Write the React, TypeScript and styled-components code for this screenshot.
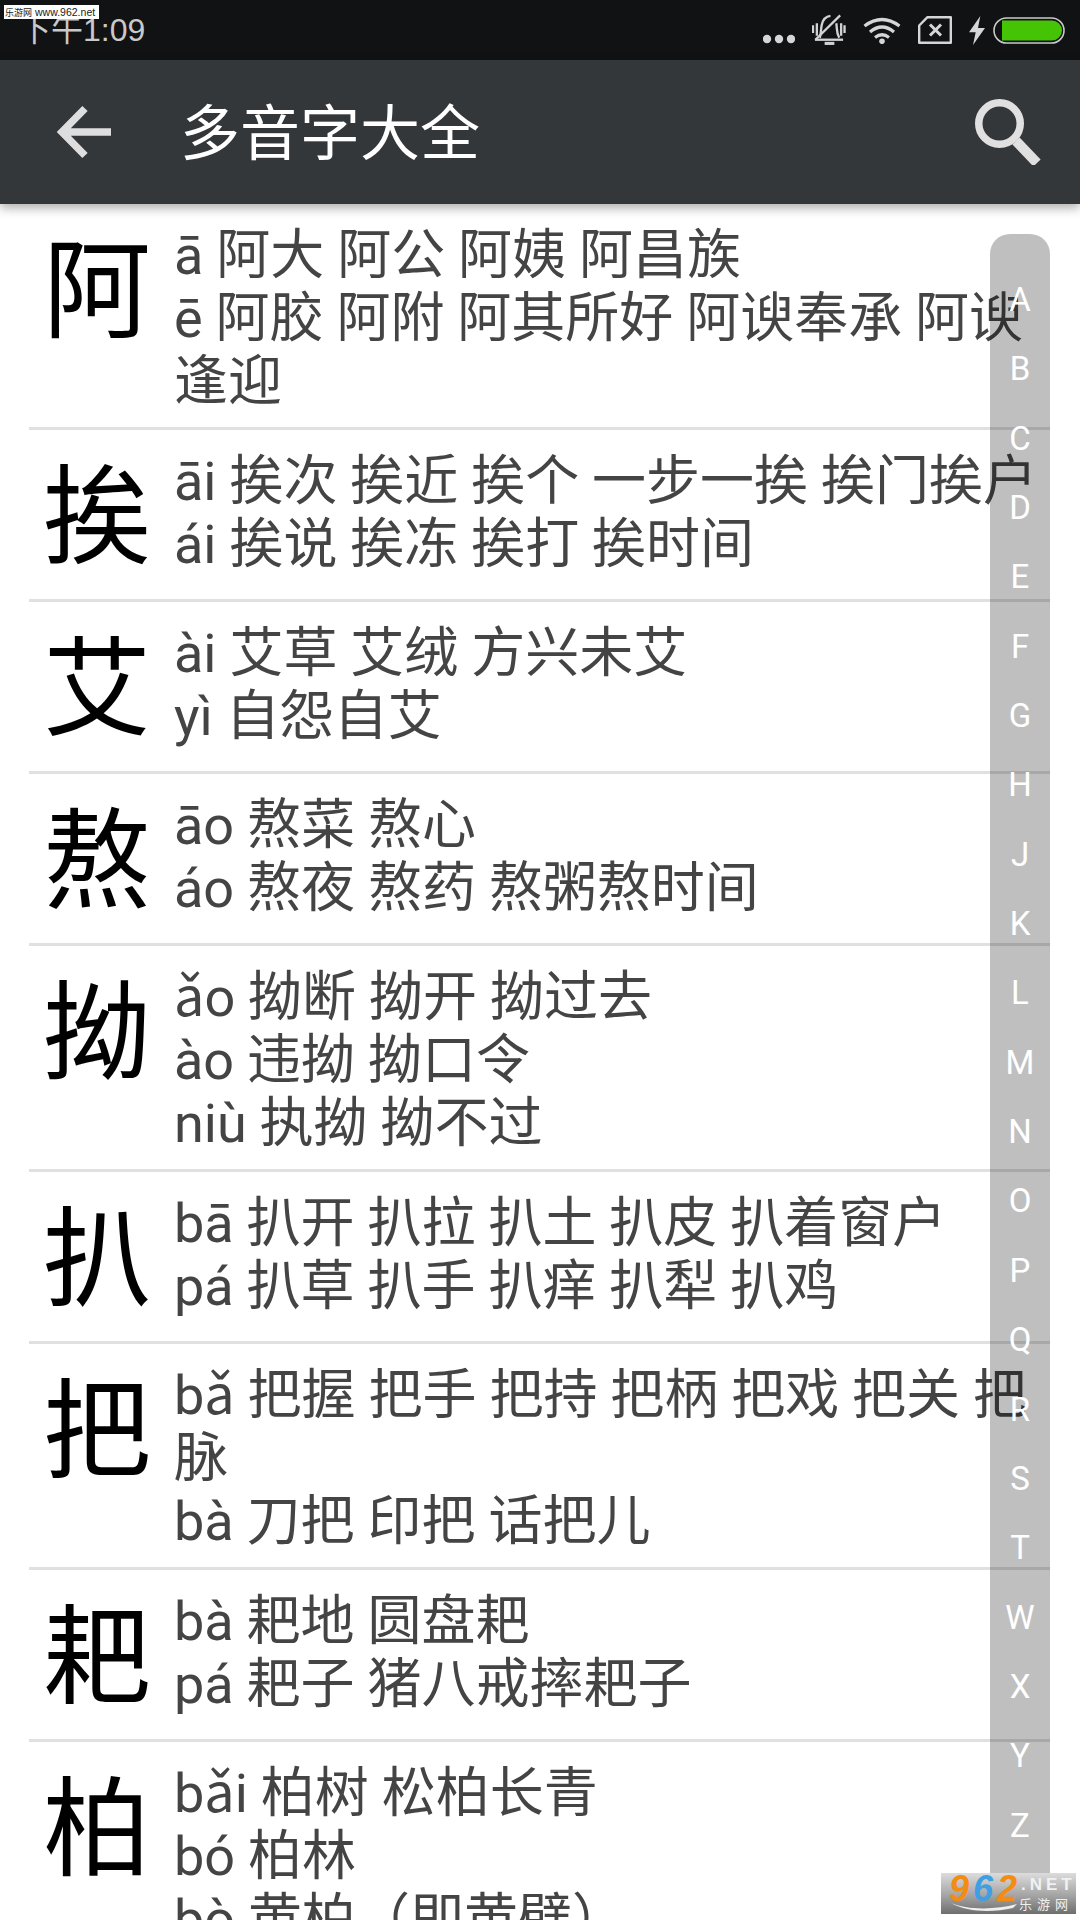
import React from "react";
import styled, { createGlobalStyle } from "styled-components";

const Global = createGlobalStyle`
  html, body { margin: 0; padding: 0; background: #fff; }
  #root { width: 1080px; height: 1920px; overflow: hidden; }
`;

const Page = styled.div`
  position: relative;
  width: 1080px;
  height: 1920px;
  overflow: hidden;
  background: #fff;
  font-family: Roboto, "Noto Sans CJK SC", sans-serif;
`;

const StatusBar = styled.div`
  height: 60px;
  background: #111213;
  display: flex;
  align-items: center;
  justify-content: space-between;
  padding: 0 15px 0 19px;
  box-sizing: border-box;
`;

const Clock = styled.div`
  font-size: 32px;
  line-height: 60px;
  color: #c9c9c9;
  font-family: "Liberation Sans", "Noto Sans CJK SC", sans-serif;
`;

const StatusIcons = styled.div`
  display: flex;
  align-items: center;
`;

const StatusIcon = styled.svg<{ $gap: number; $drop?: number }>`
  display: block;
  margin-left: ${(p) => p.$gap}px;
  margin-top: ${(p) => p.$drop ?? 0}px;
`;

const Toolbar = styled.header`
  position: relative;
  z-index: 1;
  height: 144px;
  background: #33373a;
  box-shadow: 0 4px 10px rgba(0, 0, 0, 0.32);
  display: flex;
  align-items: center;
  padding: 0 39px 0 52px;
  box-sizing: border-box;
`;

const Title = styled.h1`
  flex: 1;
  margin: 0 0 0 64px;
  padding-top: 6px;
  font-size: 60px;
  line-height: 138px;
  font-weight: 400;
  color: #fff;
`;

const List = styled.div`
  display: flex;
  flex-direction: column;
`;

const Row = styled.div`
  display: flex;
  align-items: flex-start;
  margin: 0 30px 0 29px;
  min-height: 172px;
  box-sizing: border-box;
  border-bottom: 3px solid #e0e0e0;
`;

const Glyph = styled.div`
  flex: 0 0 145px;
  box-sizing: border-box;
  padding: 8px 0 0 14px;
  font-size: 108px;
  line-height: 161px;
  color: #000;
`;

const Readings = styled.div`
  flex: 1;
  min-width: 0;
  padding: 20px 0 14px;
`;

const Reading = styled.div`
  font-size: 54px;
  line-height: 63px;
  word-spacing: -0.5px;
  color: #444;
`;

const IndexBar = styled.nav`
  position: absolute;
  top: 234px;
  left: 990px;
  width: 60px;
  height: 1660px;
  border-radius: 20px;
  background: rgba(0, 0, 0, 0.25);
  padding-top: 31px;
  box-sizing: border-box;
  display: flex;
  flex-direction: column;
  align-items: center;
`;

const IndexLetter = styled.span`
  height: 69.35px;
  line-height: 69.35px;
  font-size: 33px;
  color: #fff;
`;

const SiteTag = styled.div`
  position: absolute;
  top: 5px;
  left: 4px;
  width: 95px;
  height: 14px;
  background: #fff;
  color: #222;
  font-size: 10.500px;
  line-height: 14px;
  white-space: nowrap;
  font-family: "Liberation Sans", "Noto Sans CJK SC", sans-serif;
`;

const SiteCn = styled.span`
  font-size: 9px;
  margin: 0 3px 0 1px;
`;

const Logo = styled.div`
  position: absolute;
  left: 941px;
  top: 1873px;
  width: 135px;
  height: 41px;
  background: linear-gradient(#dcdcdc, #a4a4a4 55%, #6e6e6e);
  overflow: hidden;
`;

const LogoNum = styled.div`
  position: absolute;
  left: 8px;
  top: -2px;
  font: italic 700 36px/36px "Liberation Sans", sans-serif;
  letter-spacing: 4px;
  color: #f28c13;
`;

const LogoBlue = styled.span`
  color: #3f9fe2;
`;

const LogoNet = styled.div`
  position: absolute;
  left: 80px;
  top: 2px;
  font: 700 17px/20px "Liberation Sans", sans-serif;
  letter-spacing: 4px;
  color: #f1f1f1;
`;

const LogoCn = styled.div`
  position: absolute;
  left: 78px;
  top: 22px;
  font-size: 13px;
  line-height: 18px;
  letter-spacing: 5px;
  color: #f1f1f1;
  font-family: "Noto Sans CJK SC", sans-serif;
`;

const Swoosh = styled.svg`
  position: absolute;
  left: 10px;
  top: 29px;
`;

const entries: { glyph: string; lines: string[] }[] = [
  { glyph: "阿", lines: ["ā 阿大 阿公 阿姨 阿昌族", "ē 阿胶 阿附 阿其所好 阿谀奉承 阿谀 逢迎"] },
  { glyph: "挨", lines: ["āi 挨次 挨近 挨个 一步一挨 挨门挨户", "ái 挨说 挨冻 挨打 挨时间"] },
  { glyph: "艾", lines: ["ài 艾草 艾绒 方兴未艾", "yì 自怨自艾"] },
  { glyph: "熬", lines: ["āo 熬菜 熬心", "áo 熬夜 熬药 熬粥熬时间"] },
  { glyph: "拗", lines: ["ǎo 拗断 拗开 拗过去", "ào 违拗 拗口令", "niù 执拗 拗不过"] },
  { glyph: "扒", lines: ["bā 扒开 扒拉 扒土 扒皮 扒着窗户", "pá 扒草 扒手 扒痒 扒犁 扒鸡"] },
  { glyph: "把", lines: ["bǎ 把握 把手 把持 把柄 把戏 把关 把脉", "bà 刀把 印把 话把儿"] },
  { glyph: "耙", lines: ["bà 耙地 圆盘耙", "pá 耙子 猪八戒摔耙子"] },
  { glyph: "柏", lines: ["bǎi 柏树 松柏长青", "bó 柏林", "bò 黄柏（即黄壁）"] },
];

const letters = "ABCDEFGHJKLMNOPQRSTWXYZ".split("");

export default function App() {
  return (
    <Page>
      <Global />
      <StatusBar>
        <Clock>下午1:09</Clock>
        <StatusIcons>
          <StatusIcon $gap={0} $drop={18} width="32" height="10" viewBox="0 0 32 10">
            <g fill="#d6d6d6">
              <circle cx="4" cy="5" r="4.200" />
              <circle cx="16" cy="5" r="4.200" />
              <circle cx="28" cy="5" r="4.200" />
            </g>
          </StatusIcon>
          <StatusIcon $gap={17} width="34" height="32" viewBox="0 0 35 32">
            <g fill="none" stroke="#d2d2d2" strokeWidth="2.400">
              <path d="M8 24c1.500-4 1-9 2-13 1-5 4-9 9-9.500M25 9c1 6 0 10 3 15" />
              <path d="M3 26H32" />
              <path d="M3.500 26L29 1" />
              <path d="M13 29.800H23" strokeWidth="3.200" />
              <path d="M1 11v8M5 9v13M30 9v13M33.500 11v8" />
            </g>
          </StatusIcon>
          <StatusIcon $gap={17} width="38" height="27" viewBox="0 0 38 27">
            <g fill="none" stroke="#d6d6d6" strokeWidth="3.200">
              <path d="M1.500 9Q19 -4 36.500 9" />
              <path d="M7 15Q19 5 31 15" />
              <path d="M12 20.500Q19 15 26 20.500" />
            </g>
            <circle cx="19" cy="24.300" r="2.800" fill="#d6d6d6" />
          </StatusIcon>
          <StatusIcon $gap={17} width="34" height="28" viewBox="0 0 34 28">
            <path d="M9.500 1.200H32.800V26.800H1.200V9.500Z" fill="none" stroke="#d6d6d6" strokeWidth="2.400" strokeLinejoin="round" />
            <path d="M12 8.500l11 11M23 8.500L12 19.500" stroke="#d6d6d6" strokeWidth="3" fill="none" />
          </StatusIcon>
          <StatusIcon $gap={17} width="16" height="29" viewBox="0 0 16 29">
            <path d="M11.300 0L0 16.300H6.700L4 29 16 12H9Z" fill="#d6d6d6" />
          </StatusIcon>
          <StatusIcon $gap={8} width="72" height="27" viewBox="0 0 72 27">
            <rect x="1" y="1" width="70" height="25" rx="12.500" fill="none" stroke="#c9c9c9" strokeWidth="1.600" />
            <path d="M9 3.500H59a10 10 0 0 1 0 20H9Z" fill="#45c305" />
          </StatusIcon>
        </StatusIcons>
      </StatusBar>
      <Toolbar>
        <svg width="64" height="64" viewBox="0 0 64 64">
          <path d="M10 32H59M33 8.500L10 32 33 55.500" fill="none" stroke="#dedede" strokeWidth="7.500" />
        </svg>
        <Title>多音字大全</Title>
        <svg width="66" height="66" viewBox="0 0 66 66">
          <circle cx="24.500" cy="24.500" r="20.750" fill="none" stroke="#e0e0e0" strokeWidth="7.500" />
          <path d="M41 42L62 64" fill="none" stroke="#e0e0e0" strokeWidth="10" />
        </svg>
      </Toolbar>
      <List>
        {entries.map((e) => (
          <Row key={e.glyph}>
            <Glyph>{e.glyph}</Glyph>
            <Readings>
              {e.lines.map((l) => (
                <Reading key={l}>{l}</Reading>
              ))}
            </Readings>
          </Row>
        ))}
      </List>
      <IndexBar>
        {letters.map((l) => (
          <IndexLetter key={l}>{l}</IndexLetter>
        ))}
      </IndexBar>
      <SiteTag>
        <SiteCn>乐游网</SiteCn>www.962.net
      </SiteTag>
      <Logo>
        <LogoNum>
          9<LogoBlue>6</LogoBlue>2
        </LogoNum>
        <LogoNet>.NET</LogoNet>
        <LogoCn>乐游网</LogoCn>
        <Swoosh width="68" height="10" viewBox="0 0 68 10">
          <path d="M0 1C16 8 44 8 66 2L62 6C40 11 16 10 0 1Z" fill="#eee" />
        </Swoosh>
      </Logo>
    </Page>
  );
}
